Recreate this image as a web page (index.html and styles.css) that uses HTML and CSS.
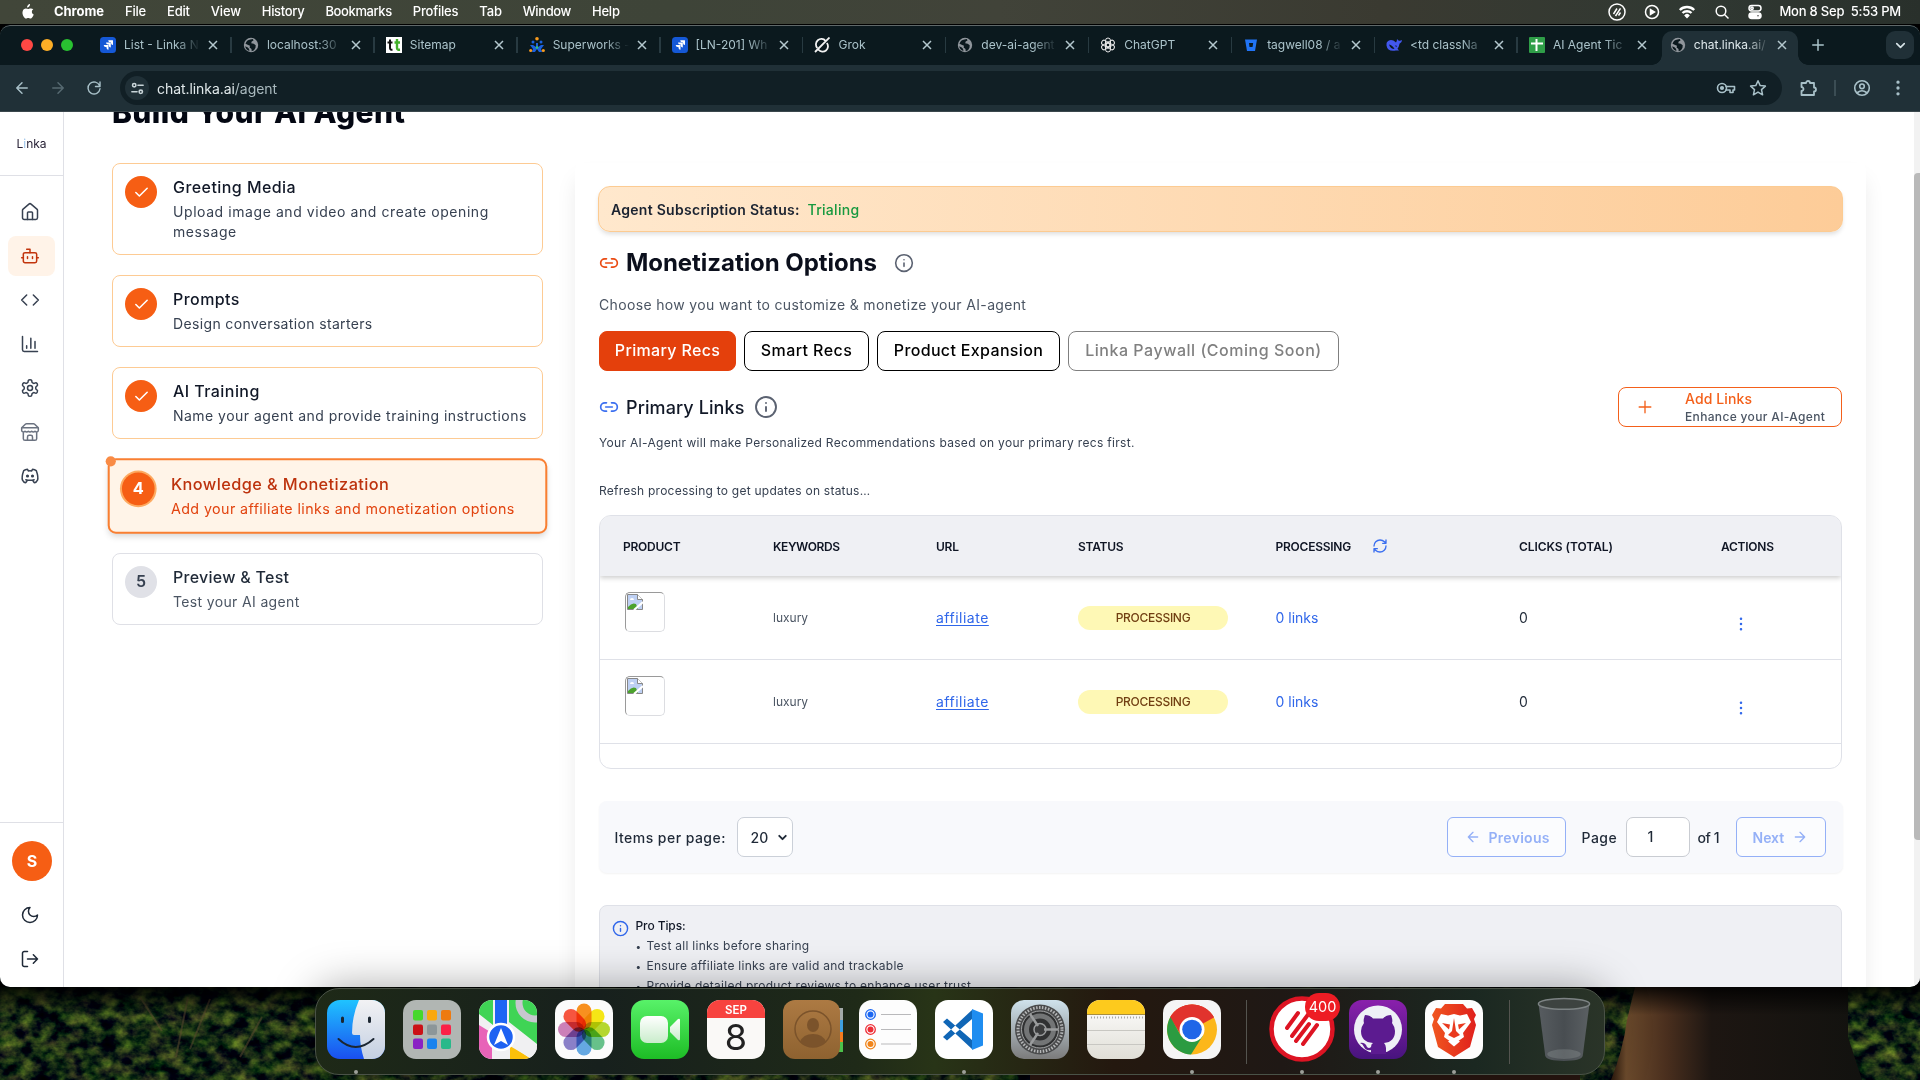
FILE: index.html
```html
<!DOCTYPE html>
<html lang="en">
<head>
<meta charset="utf-8">
<title>chat.linka.ai/agent</title>
<link rel="stylesheet" href="styles.css">
</head>
<body>
<svg class="defs" aria-hidden="true">
  <defs>
    <symbol id="home" viewBox="0 0 24 24"><path d="M15 21v-8a1 1 0 0 0-1-1h-4a1 1 0 0 0-1 1v8"/><path d="M3 10a2 2 0 0 1 .709-1.528l7-5.999a2 2 0 0 1 2.582 0l7 5.999A2 2 0 0 1 21 10v9a2 2 0 0 1-2 2H5a2 2 0 0 1-2-2z"/></symbol>
    <symbol id="bot" viewBox="0 0 24 24"><path d="M12 8V4H8M2 14h2M20 14h2M15 13v2M9 13v2"/><rect width="16" height="12" x="4" y="8" rx="2"/></symbol>
    <symbol id="code" viewBox="0 0 24 24"><path d="m16 18 6-6-6-6M8 6l-6 6 6 6"/></symbol>
    <symbol id="chart" viewBox="0 0 24 24"><path d="M3 3v16a2 2 0 0 0 2 2h16M18 17V9M13 17V5M8 17v-3"/></symbol>
    <symbol id="gear" viewBox="0 0 24 24"><path d="M12.22 2h-.44a2 2 0 0 0-2 2v.18a2 2 0 0 1-1 1.73l-.43.25a2 2 0 0 1-2 0l-.15-.08a2 2 0 0 0-2.73.73l-.22.38a2 2 0 0 0 .73 2.73l.15.1a2 2 0 0 1 1 1.72v.51a2 2 0 0 1-1 1.74l-.15.09a2 2 0 0 0-.73 2.73l.22.38a2 2 0 0 0 2.73.73l.15-.08a2 2 0 0 1 2 0l.43.25a2 2 0 0 1 1 1.73V20a2 2 0 0 0 2 2h.44a2 2 0 0 0 2-2v-.18a2 2 0 0 1 1-1.73l.43-.25a2 2 0 0 1 2 0l.15.08a2 2 0 0 0 2.73-.73l.22-.39a2 2 0 0 0-.73-2.73l-.15-.08a2 2 0 0 1-1-1.74v-.5a2 2 0 0 1 1-1.74l.15-.09a2 2 0 0 0 .73-2.73l-.22-.38a2 2 0 0 0-2.73-.73l-.15.08a2 2 0 0 1-2 0l-.43-.25a2 2 0 0 1-1-1.73V4a2 2 0 0 0-2-2z"/><circle cx="12" cy="12" r="3"/></symbol>
    <symbol id="store" viewBox="0 0 24 24"><path d="m2 7 4.41-4.41A2 2 0 0 1 7.83 2h8.34a2 2 0 0 1 1.42.59L22 7M4 12v8a2 2 0 0 0 2 2h12a2 2 0 0 0 2-2v-8M15 22v-4a2 2 0 0 0-2-2h-2a2 2 0 0 0-2 2v4M2 7h20M22 7v3a2 2 0 0 1-2 2 2.7 2.7 0 0 1-2-.8 2.7 2.7 0 0 1-4 0 2.7 2.7 0 0 1-4 0 2.7 2.7 0 0 1-4 0 2.7 2.7 0 0 1-2 .8 2 2 0 0 1-2-2V7"/></symbol>
    <symbol id="discord" viewBox="0 0 24 24"><path d="M8 12a1 1 0 1 0 2 0a1 1 0 0 0-2 0M14 12a1 1 0 1 0 2 0a1 1 0 0 0-2 0M15.5 17c0 1 1.5 3 2 3c1.5 0 2.833-1.667 3.5-3c.667-1.667.5-5.833-1.5-11.5c-1.457-1.015-3-1.34-4.5-1.5l-.972 1.923a11.913 11.913 0 0 0-4.053 0L9 4c-1.5.16-3.043.485-4.5 1.5c-2 5.667-2.167 9.833-1.5 11.5c.667 1.333 2 3 3.5 3c.5 0 2-2 2-3M7 16.5c3.5 1 6.5 1 10 0"/></symbol>
    <symbol id="moon" viewBox="0 0 24 24"><path d="M12 3a6 6 0 0 0 9 9 9 9 0 1 1-9-9z"/></symbol>
    <symbol id="logout" viewBox="0 0 24 24"><path d="m16 17 5-5-5-5M21 12H9M9 21H5a2 2 0 0 1-2-2V5a2 2 0 0 1 2-2h4"/></symbol>
    <symbol id="link" viewBox="0 0 24 24"><path d="M9 17H7A5 5 0 0 1 7 7h2M15 7h2a5 5 0 1 1 0 10h-2M8 12h8"/></symbol>
    <symbol id="info" viewBox="0 0 24 24"><circle cx="12" cy="12" r="10"/><path d="M12 16v-4M12 8h.01"/></symbol>
    <symbol id="refresh" viewBox="0 0 24 24"><path d="M3 12a9 9 0 0 1 9-9 9.75 9.75 0 0 1 6.74 2.74L21 8M21 3v5h-5M21 12a9 9 0 0 1-9 9 9.75 9.75 0 0 1-6.74-2.74L3 16M8 16H3v5"/></symbol>
    <symbol id="check" viewBox="0 0 24 24"><path d="M20 6 9 17l-5-5"/></symbol>
    <symbol id="plus" viewBox="0 0 24 24"><path d="M5 12h14M12 5v14"/></symbol>
    <symbol id="left" viewBox="0 0 24 24"><path d="m12 19-7-7 7-7M19 12H5"/></symbol>
    <symbol id="right" viewBox="0 0 24 24"><path d="M5 12h14M12 5l7 7-7 7"/></symbol>
    <symbol id="down" viewBox="0 0 24 24"><path d="m6 9 6 6 6-6"/></symbol>
    <symbol id="x" viewBox="0 0 16 16"><path d="m4 4 8 8M12 4l-8 8"/></symbol>
    <symbol id="dots" viewBox="0 0 24 24"><circle cx="12" cy="5" r="1"/><circle cx="12" cy="12" r="1"/><circle cx="12" cy="19" r="1"/></symbol>
    <symbol id="reload" viewBox="0 0 24 24"><path d="M19.5 9A8 8 0 1 0 20 13M20 4v6h-6"/></symbol>
    <symbol id="globe" viewBox="0 0 16 16"><circle cx="8" cy="8" r="7.2" fill="#8f959b" stroke="none"/><path fill="#0b191e" stroke="none" d="M7.5 2.4 9.8 2l.7 1.6-1.8 1-.5 1.7 2.5.4 2 1.5-.2 2.6-1.5 2.4-2.3 1-.2-2.1-1.9-1.6L7 8.700 5.200 8.100l-2.700-1.300A5.800 5.800 0 0 1 7.500 2.400zM2.200 9.300l2.600 1.200 1.300 1.500.3 2.100a6 6 0 0 1-4.200-4.800z"/></symbol>
    <symbol id="jira" viewBox="0 0 16 16"><rect width="16" height="16" rx="3.500" fill="#1558d6" stroke="none"/><path fill="#fff" stroke="none" d="M12.700 3.300H8.200a2 2 0 0 0 2 2h.8v.8a2 2 0 0 0 2 2V3.600zM10.500 5.600H6a2 2 0 0 0 2 2h.8v.8a2 2 0 0 0 2 2V5.900zM8.200 7.900H3.700a2 2 0 0 0 2 2h.8v.8a2 2 0 0 0 2 2V8.200z"/></symbol>
    <linearGradient id="gFinder" x2="0" y2="1"><stop stop-color="#1fc3ff"/><stop offset="1" stop-color="#1a4ff0"/></linearGradient>
    <linearGradient id="gFace" x2="0" y2="1"><stop stop-color="#f2f2f4"/><stop offset="1" stop-color="#c4d0e2"/></linearGradient>
    <linearGradient id="gGreen" x2="0" y2="1"><stop stop-color="#58f269"/><stop offset="1" stop-color="#1dbd25"/></linearGradient>
    <linearGradient id="gWhite" x2="0" y2="1"><stop stop-color="#fff"/><stop offset="1" stop-color="#c9eccb"/></linearGradient>
    <linearGradient id="gBook" x2="0" y2="1"><stop stop-color="#ad7a43"/><stop offset="1" stop-color="#8e6230"/></linearGradient>
    <linearGradient id="gSet" x2="0" y2="1"><stop stop-color="#cfe2ec"/><stop offset="1" stop-color="#7b7b7b"/></linearGradient>
    <linearGradient id="gNote" x2="0" y2="1"><stop stop-color="#fff"/><stop offset="1" stop-color="#e0ded6"/></linearGradient>
    <linearGradient id="gGit" x2="0" y2="1"><stop stop-color="#8a20ac"/><stop offset="1" stop-color="#47147e"/></linearGradient>
    <linearGradient id="gBrave"><stop stop-color="#f0561f"/><stop offset="1" stop-color="#e0201c"/></linearGradient>
    <linearGradient id="gTrash"><stop stop-color="#575c60"/><stop offset=".5" stop-color="#484d51"/><stop offset="1" stop-color="#5b6063"/></linearGradient>
    <linearGradient id="gTrunk"><stop stop-color="#2a180c"/><stop offset=".06" stop-color="#6b4a2c"/><stop offset=".22" stop-color="#4a2f1e"/><stop offset=".4" stop-color="#1d1612"/><stop offset="1" stop-color="#12120f"/></linearGradient>
    <filter id="leaves" x="0" y="0" width="100%" height="100%" color-interpolation-filters="sRGB"><feTurbulence type="fractalNoise" baseFrequency=".06 .08" numOctaves="4" seed="8"/><feColorMatrix values="0.2 .85 0 0 -.44  .4 .8 0 0 -.44  0 .2 0 0 -.02  0 0 0 0 1"/></filter>
    <clipPath id="tile"><rect width="58" height="59" rx="13"/></clipPath>
  </defs>
</svg>

<div class="desktop">
  <header class="menubar">
    <svg class="apple" viewBox="0 0 14 16"><path d="M9.700 0c.1 1.100-.3 2-.9 2.700-.6.700-1.500 1.200-2.300 1.100-.1-1 .3-1.900.9-2.600C8 .5 9 0 9.700 0zM13.300 5.500c-1 .6-1.600 1.500-1.600 2.700 0 1.400.8 2.500 2 3-.3.900-.7 1.800-1.300 2.600-.6.900-1.200 1.700-2.200 1.700-.9 0-1.300-.5-2.400-.5s-1.500.5-2.400.6c-1 0-1.700-1-2.300-1.800C1.800 12 .9 8.900 2.200 6.700c.6-1.100 1.800-1.900 3-1.900 1 0 1.800.6 2.500.6.600 0 1.700-.8 3-.7.900.1 1.900.3 2.600.8z"/></svg>
    <nav class="menus"><b>Chrome</b><span>File</span><span>Edit</span><span>View</span><span class="t3">History</span><span class="t4">Bookmarks</span><span>Profiles</span><span>Tab</span><span class="t4">Window</span><span>Help</span></nav>
    <div class="tray">
      <svg viewBox="0 0 18 18"><circle cx="9" cy="9" r="8"/><path d="m5.500 11 3.500-5.500M7.500 13l5-7.700M10.500 12.500l2-3"/></svg>
      <svg viewBox="0 0 18 18"><circle cx="9" cy="9" r="6.500"/><path fill="#fff" d="M7.500 6.500v5L11.500 9z"/></svg>
      <svg viewBox="0 0 18 18"><path class="thick" d="M1.800 7a10.300 10.300 0 0 1 14.400 0M4.500 10a6.500 6.500 0 0 1 9 0"/><path fill="#fff" d="M7.200 12.500a2.600 2.600 0 0 1 3.600 0L9 14.500z"/></svg>
      <svg viewBox="0 0 18 18"><circle cx="8" cy="8" r="4.800"/><path d="m11.500 11.500 4 4"/></svg>
      <svg class="cc" viewBox="0 0 14 16"><rect x="1" y="1.500" width="12" height="5.500" rx="2.700"/><circle cx="4" cy="4.200" r="1.200"/><rect x="1" y="9" width="12" height="5.500" rx="2.700" fill="#fff"/><circle cx="10" cy="11.700" r="1.500" fill="#333"/></svg>
      <span class="clock">Mon 8 Sep&nbsp; 5:53 PM</span>
    </div>
  </header>

  <div class="window">
    <div class="tabstrip">
      <div class="lights"><i></i><i></i><i></i></div>
      <div class="tab"><svg class="fav"><use href="#jira"/></svg><span>List - Linka N</span><svg class="close"><use href="#x"/></svg></div>
      <div class="tab"><svg class="fav"><use href="#globe"/></svg><span>localhost:30</span><svg class="close"><use href="#x"/></svg></div>
      <div class="tab"><svg class="fav" viewBox="0 0 16 16"><path fill="#fff" d="M0 0h16v16H0z"/><path fill="none" stroke="#111" stroke-width="2" d="M4 2.500v8.500q0 2 2.500 1.800M1.500 5.500h5"/><path fill="none" stroke="#43b02a" stroke-width="2.400" d="M11 2v9q0 2 3 1.800M8.500 5.500h5.500"/></svg><span>Sitemap</span><svg class="close"><use href="#x"/></svg></div>
      <div class="tab"><svg class="fav" viewBox="0 0 16 16"><g fill="#1b62e0"><circle cx="4" cy="5" r="1.500"/><circle cx="12" cy="5" r="1.500"/><path d="M1 8h3l3 2V6h2v4l3-2h3l-3 4 1 3h-3l-2-3-2 3H3l1-3z"/></g><g fill="#f79a1e"><circle cx="8" cy="1.800" r="1.800"/><circle cx="1.700" cy="13.500" r="1.600"/><circle cx="14.300" cy="13.500" r="1.600"/></g><circle cx="8" cy="10.500" r="1.300" fill="#35c46a"/></svg><span>Superworks -</span><svg class="close"><use href="#x"/></svg></div>
      <div class="tab"><svg class="fav"><use href="#jira"/></svg><span>[LN-201] Wh</span><svg class="close"><use href="#x"/></svg></div>
      <div class="tab"><svg class="fav" viewBox="0 0 16 16"><path fill="none" stroke="#f2f2f2" stroke-width="1.800" d="M11.500 3.800A5.200 5.200 0 0 0 3.300 11M4.500 12.700A5.200 5.200 0 0 0 12.800 6M1 15 15.500.5"/></svg><span>Grok</span><svg class="close"><use href="#x"/></svg></div>
      <div class="tab"><svg class="fav"><use href="#globe"/></svg><span>dev-ai-agent</span><svg class="close"><use href="#x"/></svg></div>
      <div class="tab"><svg class="fav" viewBox="0 0 16 16"><g fill="none" stroke="#e6e6e6" stroke-width="1"><rect x="5.500" y="1" width="5" height="9" rx="2.500"/><rect x="5.500" y="1" width="5" height="9" rx="2.500" transform="rotate(60 8 8)"/><rect x="5.500" y="1" width="5" height="9" rx="2.500" transform="rotate(120 8 8)"/><rect x="5.500" y="1" width="5" height="9" rx="2.500" transform="rotate(180 8 8)"/><rect x="5.500" y="1" width="5" height="9" rx="2.500" transform="rotate(240 8 8)"/><rect x="5.500" y="1" width="5" height="9" rx="2.500" transform="rotate(300 8 8)"/></g></svg><span>ChatGPT</span><svg class="close"><use href="#x"/></svg></div>
      <div class="tab"><svg class="fav" viewBox="0 0 16 16"><path fill="#2174f5" d="M2 2.500h12l-2 11.500H4z"/><path fill="#0b191e" d="M6 6h4.200l-.7 4h-3z"/></svg><span>tagwell08 / a</span><svg class="close"><use href="#x"/></svg></div>
      <div class="tab"><svg class="fav" viewBox="0 0 16 16"><path fill="#4257ee" d="M1 5q4-4 9 .5 1-1 1-3.500 1.500 1.500 2 1.800Q14.500 4 16 3q0 3-2.500 3.800-.5 3-2 5l1.500 1.700H9.800Q1.500 15 .5 8.500.3 6 1 5z"/><path fill="#0b191e" d="M3 7.500q3.500.5 5.500 4.500Q4.500 12 3 7.500zM9 8.500l1.800.2-.5 1.500z"/></svg><span>&lt;td classNa</span><svg class="close"><use href="#x"/></svg></div>
      <div class="tab"><svg class="fav" viewBox="0 0 16 16"><rect width="16" height="16" rx="1" fill="#2f9e48"/><path stroke="#fff" stroke-width="2" d="M7.500 2v12M2 6.500h12"/></svg><span>AI Agent Tic</span><svg class="close"><use href="#x"/></svg></div>
      <div class="tab current"><svg class="fav"><use href="#globe"/></svg><span>chat.linka.ai/</span><svg class="close"><use href="#x"/></svg></div>
      <svg class="icon newtab"><use href="#plus"/></svg>
      <div class="tabmenu"><svg class="icon"><use href="#down"/></svg></div>
    </div>
    <div class="toolbar">
      <div class="navs"><svg class="icon"><use href="#left"/></svg><svg class="icon dim"><use href="#right"/></svg><svg class="icon"><use href="#reload"/></svg></div>
      <div class="omnibox">
        <span class="site"><svg class="icon" viewBox="0 0 16 16"><circle cx="4.500" cy="4.500" r="1.800"/><path d="M8.500 4.500H14M2 11.500h5.500"/><circle cx="11.500" cy="11.500" r="1.800"/></svg></span>
        <span class="url"><b>chat.linka.ai</b>/agent</span>
        <svg class="icon key" viewBox="0 0 20 16"><circle cx="6" cy="8" r="4.500"/><circle cx="6" cy="8" r="1.300" fill="currentColor"/><path d="M10 6.500h8.500v3.500h-1.500v2.500h-3V10h-4"/></svg>
        <svg class="icon star" viewBox="0 0 18 18"><path d="m9 1.800 2.200 4.800 5.200.5-3.900 3.500 1.100 5.200L9 13.100l-4.600 2.700 1.100-5.200L1.600 7.100l5.200-.5z"/></svg>
      </div>
      <svg class="icon puzzle" viewBox="0 0 18 18"><path d="M2.500 4H7a2 2 0 0 1 4 0h4v4.500a2 2 0 0 1 0 4V16H2.500v-4a2 2 0 0 0 0-4z"/></svg>
      <i class="bar"></i>
      <svg class="icon profile" viewBox="0 0 18 18"><circle cx="9" cy="9" r="7.300"/><circle cx="9" cy="7.300" r="2.300"/><path d="M4.500 13.500q4.500-3.500 9 0"/></svg>
      <svg class="icon more"><use href="#dots"/></svg>
    </div>

    <div class="page">
      <aside class="sidebar">
        <div class="brand">L<i>i</i>nka</div>
        <nav class="side-nav">
          <a><svg class="icon"><use href="#home"/></svg></a>
          <a class="on"><svg class="icon"><use href="#bot"/></svg></a>
          <a><svg class="icon"><use href="#code"/></svg></a>
          <a><svg class="icon"><use href="#chart"/></svg></a>
          <a><svg class="icon"><use href="#gear"/></svg></a>
          <a class="muted"><svg class="icon"><use href="#store"/></svg></a>
          <a><svg class="icon"><use href="#discord"/></svg></a>
        </nav>
        <div class="side-foot">
          <span class="avatar">S</span>
          <a><svg class="icon"><use href="#moon"/></svg></a>
          <a><svg class="icon"><use href="#logout"/></svg></a>
        </div>
      </aside>

      <main class="main">
        <h1>Build Your AI Agent</h1>
        <div class="columns">
          <ol class="steps">
            <li class="step done"><span class="num"><svg class="icon"><use href="#check"/></svg></span><div><h3>Greeting Media</h3><p class="t6">Upload image and video and create opening message</p></div></li>
            <li class="step done"><span class="num"><svg class="icon"><use href="#check"/></svg></span><div><h3>Prompts</h3><p>Design conversation starters</p></div></li>
            <li class="step done"><span class="num"><svg class="icon"><use href="#check"/></svg></span><div><h3>AI Training</h3><p class="t5">Name your agent and provide training instructions</p></div></li>
            <li class="step active"><span class="num">4</span><div><h3>Knowledge &amp; Monetization</h3><p>Add your affiliate links and monetization options</p></div></li>
            <li class="step"><span class="num">5</span><div><h3>Preview &amp; Test</h3><p>Test your AI agent</p></div></li>
          </ol>

          <section class="panel">
            <div class="banner"><b>Agent Subscription Status:</b><span>Trialing</span></div>
            <div class="title"><svg class="icon link"><use href="#link"/></svg><h2>Monetization Options</h2><svg class="icon info"><use href="#info"/></svg></div>
            <p class="lead">Choose how you want to customize &amp; monetize your AI-agent</p>
            <div class="modes">
              <button class="mode selected">Primary Recs</button>
              <button class="mode smart">Smart Recs</button>
              <button class="mode expand">Product Expansion</button>
              <button class="mode off">Linka Paywall (Coming Soon)</button>
            </div>
            <div class="links-head">
              <svg class="icon link"><use href="#link"/></svg><h4>Primary Links</h4><svg class="icon info"><use href="#info"/></svg>
              <button class="add"><svg class="icon"><use href="#plus"/></svg><span><b>Add Links</b><small>Enhance your AI-Agent</small></span></button>
            </div>
            <p class="note">Your AI-Agent will make Personalized Recommendations based on your primary recs first.</p>
            <p class="note refresh">Refresh processing to get updates on status…</p>

            <div class="table">
              <div class="thead"><span>Product</span><span class="kw">Keywords</span><span>URL</span><span>Status</span><span class="proc">Processing<svg class="icon"><use href="#refresh"/></svg></span><span class="clk">Clicks (Total)</span><span>Actions</span></div>
              <div class="row">
                <span class="thumb"><svg viewBox="0 0 16 16"><path fill="#bed0f3" stroke="#878787" d="M.5.5h10l5 5v10H.5z"/><path fill="#fff" stroke="#878787" d="M10.500.5v5h5"/><path fill="#fff" d="M3 6q0-2 2-2 2 0 2 2z"/><path fill="#4ba22d" d="M1 15v-2q4-5 8-3l2 5z"/><path stroke="#fff" stroke-width="2.200" d="m7 16 9-8"/></svg></span>
                <span class="word">luxury</span><a class="aff">affiliate</a><span class="pill">PROCESSING</span><a>0 links</a><span>0</span><svg class="icon more"><use href="#dots"/></svg>
              </div>
              <div class="row">
                <span class="thumb"><svg viewBox="0 0 16 16"><path fill="#bed0f3" stroke="#878787" d="M.5.5h10l5 5v10H.5z"/><path fill="#fff" stroke="#878787" d="M10.500.5v5h5"/><path fill="#fff" d="M3 6q0-2 2-2 2 0 2 2z"/><path fill="#4ba22d" d="M1 15v-2q4-5 8-3l2 5z"/><path stroke="#fff" stroke-width="2.200" d="m7 16 9-8"/></svg></span>
                <span class="word">luxury</span><a class="aff">affiliate</a><span class="pill">PROCESSING</span><a>0 links</a><span>0</span><svg class="icon more"><use href="#dots"/></svg>
              </div>
            </div>

            <div class="pager">
              <span class="per">Items per page:</span>
              <span class="select">20<svg class="icon"><use href="#down"/></svg></span>
              <button class="pg prev"><svg class="icon"><use href="#left"/></svg>Previous</button>
              <span class="pgword">Page</span><span class="pgnum">1</span><span class="of">of 1</span>
              <button class="pg next">Next<svg class="icon"><use href="#right"/></svg></button>
            </div>

            <div class="tips">
              <svg class="icon"><use href="#info"/></svg>
              <div><h5>Pro Tips:</h5><ul><li>Test all links before sharing</li><li>Ensure affiliate links are valid and trackable</li><li>Provide detailed product reviews to enhance user trust</li></ul></div>
            </div>
          </section>
        </div>
      </main>
      <div class="scrollbar"><i></i></div>
    </div>
  </div>

  <div class="wallpaper">
    <svg width="1920" height="93" viewBox="0 0 1920 93"><rect width="1920" height="93" filter="url(#leaves)"/>
      <path fill="none" stroke="#5b4a30" stroke-width="2" opacity=".5" d="m140 10 22 34M188 10l-12 60M210 12l-20 50M262 30l-22 40"/>
      <path fill="url(#gTrunk)" d="M1635 0h213v50l14 43h-251q12-30 16-60z"/>
      <path fill="#2a1711" d="M1030 86h550v7h-550z"/>
    </svg>
  </div>

  <div class="dock">
    <span class="app run"><svg viewBox="0 0 58 59"><g clip-path="url(#tile)"><path fill="url(#gFinder)" d="M0 0h58v59H0z"/><path fill="url(#gFace)" d="M32 0q-7 16-7 33 0 2 2 2h6q0 12 4 24h21V0z"/></g><path fill="none" stroke="#1b2631" stroke-width="2" stroke-linecap="round" d="M11.500 39q17 16 35 0"/><path stroke="#1b2631" stroke-width="3" stroke-linecap="round" d="M15.500 18v3.500M42.500 18v3.500"/></svg></span>
    <span class="app"><svg viewBox="0 0 58 59"><rect width="58" height="59" rx="13" fill="#b1b6b3"/><g><rect x="10" y="10" width="10" height="10.500" rx="2" fill="#46d82c"/><rect x="24" y="10" width="10" height="10.500" rx="2" fill="#f9a80f"/><rect x="38" y="10" width="10" height="10.500" rx="2" fill="#ee7a10"/><rect x="10" y="24.500" width="10" height="10.500" rx="2" fill="#cb1016"/><rect x="24" y="24.500" width="10" height="10.500" rx="2" fill="#8c9699"/><rect x="38" y="24.500" width="10" height="10.500" rx="2" fill="#fa2147"/><rect x="10" y="38.500" width="10" height="10.500" rx="2" fill="#8a22c4"/><rect x="24" y="38.500" width="10" height="10.500" rx="2" fill="#1b83ee"/><rect x="38" y="38.500" width="10" height="10.500" rx="2" fill="#28b98a"/></g></svg></span>
    <span class="app"><svg viewBox="0 0 58 59"><g clip-path="url(#tile)"><path fill="#f0f0f2" d="M0 0h58v59H0z"/><path fill="#3fd455" d="M0 0h14v25L0 14zM30 0h28v44L30 22z"/><circle cx="56" cy="3" r="16" fill="none" stroke="#c7c7cf" stroke-width="7"/><path fill="#e863b8" d="M0 25l13 8v26H0z"/><path fill="#fbc00a" d="M31 59V46l22 13z"/><path fill="#f0f0f2" d="m30 29 28 18v12h-6L30 44z"/><path fill="#1d65f3" d="M16 0h12v30H16z"/></g><circle cx="22" cy="37" r="13" fill="#1e62f2" stroke="#fff" stroke-width="2.500"/><path fill="#fff" d="m22 28 7 17-7-4-7 4z"/></svg></span>
    <span class="app"><svg viewBox="0 0 58 59"><rect width="58" height="59" rx="13" fill="#fbfbfb"/><g class="petals"><rect x="21.500" y="3.500" width="15" height="26" rx="7.500" fill="#f8901f"/><rect x="21.500" y="3.500" width="15" height="26" rx="7.500" fill="#f5e616" transform="rotate(45 29 29.500)"/><rect x="21.500" y="3.500" width="15" height="26" rx="7.500" fill="#b5d72f" transform="rotate(90 29 29.500)"/><rect x="21.500" y="3.500" width="15" height="26" rx="7.500" fill="#67c18a" transform="rotate(135 29 29.500)"/><rect x="21.500" y="3.500" width="15" height="26" rx="7.500" fill="#65a8e2" transform="rotate(180 29 29.500)"/><rect x="21.500" y="3.500" width="15" height="26" rx="7.500" fill="#8a80c8" transform="rotate(225 29 29.500)"/><rect x="21.500" y="3.500" width="15" height="26" rx="7.500" fill="#cc80b8" transform="rotate(270 29 29.500)"/><rect x="21.500" y="3.500" width="15" height="26" rx="7.500" fill="#f6553f" transform="rotate(315 29 29.500)"/></g></svg></span>
    <span class="app"><svg viewBox="0 0 58 59"><rect width="58" height="59" rx="13" fill="url(#gGreen)"/><rect x="9" y="16" width="28" height="27" rx="7" fill="url(#gWhite)"/><path fill="url(#gWhite)" d="m39 27 8-8q2-1 2 1v19q0 2-2 1l-8-8z"/></svg></span>
    <span class="app cal"><b>SEP</b><em>8</em></span>
    <span class="app"><svg viewBox="0 0 58 59"><path fill="#a4aaa9" d="M53 8h7v12h-7z"/><path fill="#3fa0df" d="M53 20h7v12h-7z"/><path fill="#f47c1e" d="M53 32h7v10h-7z"/><path fill="#4cc24a" d="M53 42h7v10h-7z"/><rect width="57" height="59" rx="12" fill="url(#gBook)"/><g fill="#7b532b"><circle cx="30" cy="29" r="18" fill="none" stroke="#7b532b" stroke-width="1.500"/><ellipse cx="30" cy="25" rx="6" ry="7"/><path d="M17 42q3-8 13-8t13 8q-5 5-13 5t-13-5z"/></g></svg></span>
    <span class="app"><svg viewBox="0 0 58 59"><rect width="58" height="59" rx="13" fill="#fdfdfd"/><g stroke-width="1.300" fill="none"><circle cx="11.500" cy="14.500" r="4.800" stroke="#1c67f2"/><circle cx="11.500" cy="29.500" r="4.800" stroke="#ee2d35"/><circle cx="11.500" cy="44" r="4.800" stroke="#f1851b"/></g><circle cx="11.500" cy="14.500" r="3" fill="#1c67f2"/><circle cx="11.500" cy="29.500" r="3" fill="#ee2d35"/><circle cx="11.500" cy="44" r="3" fill="#f1851b"/><path stroke="#b9b9bb" d="M22 14.500h30M22 29.500h30M22 44h30"/></svg></span>
    <span class="app run"><svg viewBox="0 0 58 59"><rect width="58" height="59" rx="13" fill="#fff"/><path fill="#1066b6" d="m8 22 4-3.500L37 40v9zM8 37l4 3.500L37 19v-9z"/><path fill="#1f8df0" d="m37 9 11 4.500v32L37 50z"/><path fill="#fff" d="M37 22v16L27 30z"/></svg></span>
    <span class="app"><svg viewBox="0 0 58 59"><rect width="58" height="59" rx="13" fill="url(#gSet)"/><circle cx="29" cy="29.500" r="25" fill="#4a4b4c"/><circle cx="29" cy="29.500" r="22" fill="none" stroke="#b5b7b8" stroke-width="3" stroke-dasharray="1.500 1.500"/><circle cx="29" cy="29.500" r="18.500" fill="#303132" stroke="#a2a4a5"/><circle cx="29" cy="29.500" r="13.500" fill="none" stroke="#737576" stroke-width="5"/><circle cx="29" cy="29.500" r="6" fill="#3b3c3d" stroke="#9a9c9d" stroke-width="1.500"/><path stroke="#9a9c9d" stroke-width="2.500" d="M33 29.500h14M27 26l-8-12M27 33l-8 12"/></svg></span>
    <span class="app"><svg viewBox="0 0 58 59"><g clip-path="url(#tile)"><path fill="url(#gNote)" d="M0 0h58v59H0z"/><path fill="#fdca1d" d="M0 0h58v14H0z"/><path stroke="#a88e3e" d="M0 14.500h58"/><path stroke="#a9a9a6" stroke-width="2" stroke-dasharray="1 2" d="M4 17.500h54"/><path stroke="#c8c7c2" d="M0 30.500h58M0 44.500h58"/></g></svg></span>
    <span class="app run"><svg viewBox="0 0 58 59"><rect width="58" height="59" rx="13" fill="#f5f5f5"/><circle cx="29" cy="29.500" r="25" fill="#fcb71a"/><path fill="#e1332d" d="M29 29.500 7.400 17A25 25 0 0 1 51 17.500z"/><path fill="#e1332d" d="M7 17.500A25 25 0 0 1 50.700 17H29L18 35z"/><path fill="#2b9b41" d="M7.400 17A25 25 0 0 0 28 54.500L40 35.500 29 41l-11-5z"/><circle cx="29" cy="29.500" r="12.500" fill="#fff"/><circle cx="29" cy="29.500" r="9.800" fill="#1f66e8"/></svg></span>
    <i class="split"></i>
    <span class="app run round"><svg viewBox="0 0 66 66"><circle cx="33" cy="33" r="30.500" fill="#fff" stroke="#dd1423" stroke-width="4.500"/><path stroke="#dd1423" stroke-width="4" stroke-linecap="round" d="m18 32 11-15M23 40l18-24M27 45l13-17M34 48l14-19"/></svg><b class="badge">400</b></span>
    <span class="app run"><svg viewBox="0 0 58 59"><rect width="58" height="59" rx="13" fill="url(#gGit)"/><circle cx="29" cy="29.500" r="24" fill="#eef0f6"/><path fill="#5c1b90" d="M16 15q5 0 8 3.500h10Q37 15 42 15q2 5 1 8 3 4 3 8 0 11-11 12 2 2 2 5v6H22v-4q-5 1-7-3-1-3-4-4 5-1 7 4 2 2 4 0 0-3 2-4-12-1-12-12 0-4 3-8-1-3 1-8z"/></svg></span>
    <span class="app run"><svg viewBox="0 0 58 59"><rect width="58" height="59" rx="13" fill="#fdfdfd"/><path fill="url(#gBrave)" d="M20 4h18l4 4.500 5-.5 4 7-2 4 2 6-6 22-16 10-16-10-6-22 2-6-2-4 4-7 5 .5z"/><path fill="#fff" d="m16 14 7 1.500 6-1.500 6 1.500 7-1.500 4 8-8 11 1 4-7 5-3-1-3 1-7-5 1-4-8-11z"/><path fill="#e93a1f" d="m17 23 8 1.500-1 5zM41 23l-8 1.500 1 5zM29 18l2 13 4 4-6 3-6-3 4-4z"/><path fill="#fff" d="m29 38 6 3.500-6 5-6-5z"/></svg></span>
    <i class="split second"></i>
    <span class="app trash"><svg viewBox="0 0 54 66"><path fill="url(#gTrash)" d="M1 6 8 60q2 5 19 5t19-5l7-54z"/><ellipse cx="27" cy="7" rx="26" ry="5.500" fill="#3d4340" stroke="#7d8384" stroke-width="1.500"/><ellipse cx="27" cy="58" rx="17" ry="5" fill="#9ba1a3" opacity=".3"/></svg></span>
  </div>
</div>
</body>
</html>
```
FILE: styles.css
```css
* { box-sizing: border-box; }
body, h1, h2, h3, h4, h5, p, ul, ol { margin: 0; padding: 0; }
body { width: 1920px; height: 1080px; overflow: hidden; background: #000; font-family: "Inter", "Noto Sans", sans-serif; }
ol, ul { list-style: none; }
i, em { font-style: normal; }
button { font: inherit; background: none; padding: 0; }
svg { display: block; flex: none; }
.defs { position: absolute; width: 0; height: 0; }
.icon { width: 20px; height: 20px; fill: none; stroke: currentColor; stroke-width: 2; stroke-linecap: round; stroke-linejoin: round; }

.desktop { position: relative; width: 1920px; height: 1080px; display: flex; flex-direction: column; overflow: hidden; }

/* menu bar */
.menubar { height: 24px; flex: none; display: flex; align-items: center; padding: 0 19px 0 21px; color: #fff; font-size: 13px; font-weight: 500; line-height: 23px; background: linear-gradient(90deg, #414639, #3e4438 35%, #414339 52%, #3a3a31 72%, #303832 88%, #29302b); }
.apple { width: 13px; height: 15px; fill: #fff; margin-right: 20px; margin-top: -2px; }
.menus { display: flex; gap: 21px; letter-spacing: -.2px; margin-top: -1px; }
.menus b { font-weight: 700; letter-spacing: -.05px; width: 50px; }
.menus .t3 { letter-spacing: -.3px; }
.menus .t4 { letter-spacing: -.4px; }
.tray { margin-left: auto; margin-top: -1px; display: flex; align-items: center; gap: 17px; }
.tray svg { width: 18px; height: 18px; fill: none; stroke: #fff; stroke-width: 1.500; }
.tray .thick { stroke-width: 2.400; }
.tray .cc { width: 14px; height: 16px; }
.clock { letter-spacing: -.22px; white-space: nowrap; }

/* browser window */
.window { position: relative; height: 963px; flex: none; display: flex; flex-direction: column; border-top: 1px solid #000; border-radius: 10px; overflow: hidden; background: #0b191e; }
.tabstrip { height: 40px; flex: none; display: flex; align-items: flex-end; border-top: 1px solid #5f6869; background: #0b191e; border-radius: 10px 10px 0 0; color: #abc3ca; font-size: 12px; }
.lights { width: 89px; height: 28px; margin-bottom: 6px; align-items: center; padding-left: 21px; display: flex; gap: 8px; flex: none; }
.lights i { width: 12px; height: 12px; border-radius: 50%; background: #ff4844; }
.lights i:nth-child(2) { background: #fdae26; }
.lights i:nth-child(3) { background: #29c231; }
.tab { width: 142.900px; flex: none; height: 34px; display: flex; align-items: center; padding: 0 11px 6px; position: relative; }
.tab::after { content: ""; position: absolute; right: 0; top: 6px; width: 1.500px; height: 16px; background: #283a41; }
.tab:nth-child(12)::after { display: none; }
.fav { width: 16px; height: 16px; margin-right: 8px; stroke-width: 0; }
.tab span { flex: 1; overflow: hidden; white-space: nowrap; line-height: 16px; mask-image: linear-gradient(90deg, #000 52px, transparent 76px); margin-right: 3px; }
.tab:nth-child(4) span, .tab:nth-child(9) span { mask-image: none; }
.close { width: 16px; height: 16px; stroke: #b4c8ce; stroke-width: 1.500; fill: none; }
.tab.current { width: 136px; padding: 0 8px 6px; background: #203037; border-radius: 10px 10px 0 0; color: #dfe9ec; margin-left: 1px; }
.tab.current::before { content: ""; position: absolute; left: -10px; right: -10px; bottom: 0; height: 10px; background: radial-gradient(circle at 0 0, transparent 9.500px, #203037 10px) 0 0 / 10px 10px no-repeat, radial-gradient(circle at 100% 0, transparent 9.500px, #203037 10px) 100% 0 / 10px 10px no-repeat; }
.tab.current::after { display: none; }
.newtab { width: 18px; height: 18px; margin: 0 0 11px 11px; }
.tabmenu { margin: 0 6px 6px auto; width: 28px; height: 28px; border-radius: 9px; background: #203037; display: grid; place-items: center; color: #d6e3e7; }
.tabmenu .icon { width: 15px; height: 15px; stroke-width: 2.600; }
.toolbar { height: 47px; flex: none; display: flex; align-items: center; background: #203037; border-bottom: 1px solid #3b474c; color: #a8c0c8; }
.navs { width: 120px; padding-left: 13px; display: flex; gap: 18px; }
.navs .icon { width: 18px; height: 18px; stroke-width: 1.900; }
.dim { opacity: .4; }
.omnibox { width: 1662px; height: 34px; border-radius: 17px; background: #111f25; display: flex; align-items: center; padding: 0 15px 0 5px; }
.site { width: 24px; height: 24px; border-radius: 50%; background: #203037; display: grid; place-items: center; color: #c8d4d8; }
.site .icon { width: 15px; height: 15px; stroke-width: 1.700; }
.url { margin-left: 8px; font-size: 14px; letter-spacing: -.06px; color: #a9b9be; flex: 1; }
.url b { font-weight: 400; color: #e0e8ea; }
.key { height: 16px; stroke-width: 1.600; margin-right: 13px; }
.star { width: 18px; height: 18px; stroke-width: 1.500; }
.puzzle { width: 18px; height: 18px; margin-left: 17px; stroke-width: 1.800; }
.bar { width: 1.500px; height: 16px; background: #3b4d54; margin: 0 17px; }
.profile { width: 18px; height: 18px; stroke-width: 1.600; }
.toolbar .more { margin-left: 17px; fill: currentColor; }

/* page */
.page { height: 875px; display: flex; background: #fff; overflow: hidden; flex: none; position: relative; }
.sidebar { width: 64px; height: 875px; border-right: 1px solid #dfe0e6; display: flex; flex-direction: column; color: #374151; flex: none; }
.brand { height: 64px; border-bottom: 1px solid #dfe0e6; display: grid; grid-auto-flow: column; place-content: center; align-items: center; font-size: 12px; color: #2a2438; }
.brand i { color: #9cc3ea; }
.side-nav { padding: 16px 8px 0; display: flex; flex-direction: column; gap: 4px; }
.side-nav a, .side-foot a { height: 40px; border-radius: 8px; padding: 10px 12px; }
.side-nav .icon, .side-foot .icon { stroke-width: 1.800; }
.side-nav a.on { background: #fff3e8; color: #c2340c; }
.side-nav a.muted { color: #6b7280; }
.side-foot { margin-top: auto; height: 165px; border-top: 1px solid #dfe0e6; padding: 18px 8px 0; display: flex; flex-direction: column; gap: 4px; color: #1f2937; }
.avatar { width: 40px; height: 40px; margin: 0 0 10px 4px; border-radius: 50%; background: #f65e14; color: #fff; font-size: 16px; font-weight: 700; display: grid; place-items: center; flex: none; }

.main { width: 1850px; padding: 0 48px; flex: none; }
h1 { font-size: 30px; line-height: 36px; font-weight: 800; letter-spacing: .42px; color: #030712; margin: -18px 0 33px; }
.columns { display: flex; align-items: flex-start; gap: 32px; }
.steps { width: 431px; display: flex; flex-direction: column; gap: 20px; flex: none; }
.step { border: 1px solid #dfe0e6; border-radius: 8px; padding: 12px; display: flex; gap: 16px; position: relative; }
.step h3 { font-size: 16px; line-height: 22px; margin-bottom: 4px; font-weight: 500; letter-spacing: .27px; color: #1f2937; }
.step p { font-size: 14px; line-height: 20px; letter-spacing: .35px; color: #4b5563; }
.step p.t5 { letter-spacing: .47px; white-space: nowrap; }
.step p.t6 { letter-spacing: .57px; }
.num { width: 32px; height: 32px; border-radius: 50%; background: #e0e1e7; color: #374151; font-size: 16px; line-height: 30px; font-weight: 600; display: grid; justify-items: center; flex: none; }
.step.done { border-color: #fdcb94; }
.step.done h3 { color: #111827; letter-spacing: .44px; }
.step.done p { color: #374151; }
.step.done .num { background: #f65e14; color: #fff; align-items: center; }
.num .icon { width: 17px; height: 17px; stroke-width: 2.200; }
.step.active { border: 2px solid #f97f32; background: #fff4e8; transform: scale(1.020); box-shadow: 0 4px 7px -2px rgba(0, 0, 0, .18); }
.step.active::before { content: ""; position: absolute; left: -4px; top: -4px; width: 10px; height: 10px; border-radius: 50%; background: #f98b45; }
.step.active h3 { color: #bd320d; letter-spacing: .4px; }
.step.active p { color: #e2430f; letter-spacing: .4px; white-space: nowrap; }
.step.active .num { background: #f65e14; color: #fff; font-weight: 700; box-shadow: 0 0 0 2px #fdaa61; }

.panel { width: 1291px; height: 900px; padding: 23px 24px 0; flex: none; display: flex; flex-direction: column; box-shadow: 0 14px 22px -3px rgba(0, 0, 0, .1); border-radius: 8px; }
.banner { height: 46px; flex: none; margin: 0 -.5px 0 -1px; border: 1px solid #fccb92; border-radius: 12px; background: linear-gradient(90deg, #ffe8cd, #fdcc98); box-shadow: 0 3px 5px -1px rgba(0, 0, 0, .14); display: flex; align-items: center; padding-left: 12px; font-size: 14px; }
.banner b { font-weight: 600; letter-spacing: .28px; color: #1a2230; width: 196.500px; white-space: nowrap; }
.banner span { font-weight: 500; letter-spacing: .3px; color: #17993f; }
.title { height: 32px; margin-top: 15px; display: flex; align-items: center; color: #0b0f1c; }
.link { width: 20px; height: 20px; color: #ea4a12; margin-right: 7px; }
h2 { font-size: 24px; line-height: 32px; font-weight: 700; letter-spacing: -.05px; width: 252px; white-space: nowrap; }
.info { color: #5b6271; stroke-width: 1.900; }
.title .info { margin-left: 16px; }
.lead { font-size: 14px; line-height: 20px; letter-spacing: .34px; color: #4b5563; margin-top: 16px; }
.modes { margin-top: 16px; display: flex; gap: 8px; }
.mode { height: 40px; border: 1px solid #000; border-radius: 8px; font-size: 16px; font-weight: 500; width: 137px; white-space: nowrap; letter-spacing: .34px; padding-bottom: 2px; color: #000; }
.mode.selected { background: #e4400c; border-color: #e4400c; color: #fff; }
.mode.smart { width: 125px; letter-spacing: .42px; }
.mode.expand { width: 183px; }
.mode.off { width: 271px; letter-spacing: .52px; border-color: #7f7f7f; color: #808080; }
.links-head { margin-top: 16px; height: 40px; display: flex; align-items: center; color: #111827; }
.links-head .link { color: #3b6ff0; }
h4 { font-size: 18px; font-weight: 500; width: 128px; letter-spacing: .1px; }
.links-head .info { width: 24px; height: 24px; }
.add { margin-left: auto; width: 224px; height: 40px; border: 1px solid #f4601a; border-radius: 8px; display: flex; align-items: center; text-align: left; padding-left: 16px; color: #f4601a; }
.add .icon { stroke-width: 1.600; margin-right: 30px; }
.add b { display: block; font-size: 14px; line-height: 18px; font-weight: 500; letter-spacing: .11px; }
.add small { display: block; font-size: 12px; line-height: 17px; font-weight: 500; letter-spacing: .34px; color: #4b5563; white-space: nowrap; }
.note { font-size: 12px; line-height: 16px; letter-spacing: .31px; color: #374151; margin-top: 8px; }
.refresh { margin-top: 32px; letter-spacing: .24px; }

.table { margin-top: 16px; height: 254px; flex: none; border: 1px solid #dfe1e8; border-radius: 12px; overflow: hidden; }
.thead, .row { display: grid; grid-template-columns: 150px 163px 142px 197.500px 243.500px 202px 1fr; align-items: center; padding-left: 23px; }
.thead { height: 60px; background: #eff0f4; font-size: 12px; font-weight: 600; text-transform: uppercase; letter-spacing: -.25px; color: #0f1524; box-shadow: 0 2px 5px rgba(0, 0, 0, .2); position: relative; }
.thead .kw { letter-spacing: -.4px; }
.thead .clk { letter-spacing: -.05px; }
.proc { display: flex; align-items: center; gap: 21px; }
.proc .icon { width: 16px; height: 16px; color: #3b6ff0; }
.row { height: 84px; border-bottom: 1px solid #dfe1e8; font-size: 14px; color: #1f2937; }
.row a { color: #2f66ea; }
.thumb { width: 40px; height: 40px; margin: -12px 0 0 2px; border: 1px solid #dcdde1; border-top-color: #9a9a9a; border-left-color: #9a9a9a; border-radius: 5px; padding: 1px 0 0 1px; }
.thumb svg { width: 16px; height: 16px; fill: none; }
.word { font-size: 12px; color: #4b5563; }
.row .aff { text-decoration: underline; letter-spacing: .5px; text-underline-offset: 2px; }
.pill { width: 150px; height: 24px; line-height: 24px; border-radius: 12px; background: #fef8b5; color: #713f12; font-size: 12px; font-weight: 500; text-align: center; letter-spacing: -.28px; }
.row .more { margin: 13px 0 0 11px; width: 18px; height: 18px; color: #2f66ea; fill: #2f66ea; stroke-width: 1.400; }

.pager { margin: 32px -.5px 0; height: 72px; flex: none; border-radius: 8px; background: #f8f9fc; box-shadow: 0 1px 2px rgba(0, 0, 0, .05); display: flex; align-items: center; padding: 0 17px 0 16px; font-size: 14px; font-weight: 500; color: #1f2937; }
.per { width: 122px; letter-spacing: .46px; white-space: nowrap; }
.select { width: 56px; height: 40px; border: 1px solid #cbd0d8; border-radius: 7px; background: #fff; display: flex; align-items: center; padding-left: 13px; gap: 8px; }
.select .icon { width: 13px; height: 13px; stroke-width: 3.500; }
.pg { height: 40px; border: 1px solid #94b0f7; border-radius: 6px; color: #94b0f7; background: #fbfcfe; font-weight: 600; display: flex; align-items: center; gap: 8px; }
.pg .icon { width: 16px; height: 16px; }
.prev { margin-left: auto; width: 119px; padding-left: 17px; letter-spacing: .28px; }
.next { width: 90px; padding-left: 16px; }
.pgword { margin: 0 8px 0 16px; width: 36px; letter-spacing: .5px; }
.pgnum { width: 64px; height: 40px; line-height: 38px; border: 1px solid #c9ccd2; border-radius: 7px; background: #fff; padding-left: 21px; }
.of { margin: 0 16px 0 8px; width: 22px; letter-spacing: -.44px; white-space: nowrap; }
.tips { margin-top: 32px; height: 130px; flex: none; border: 1px solid #dfe1e8; border-radius: 8px; background: #eff0f4; display: flex; padding: 10px 12px; gap: 6.500px; }
.tips > .icon { width: 17px; height: 17px; margin-top: 4px; color: #2f66ea; }
.tips div { font-size: 12px; line-height: 20px; color: #374151; }
h5 { font-size: 12px; line-height: 20px; font-weight: 500; color: #111827; letter-spacing: -.1px; }
.tips li { display: flex; letter-spacing: .27px; }
.tips li::before { content: "•"; width: 11px; font-size: 10px; }
.scrollbar { width: 6px; background: #f2f2f2; padding-top: 61px; }
.scrollbar i { display: block; height: 667px; border-radius: 4px 0 0 4px; background: #b9b9b9; }

/* desktop picture and dock */
.wallpaper { height: 93px; flex: none; overflow: hidden; background: #0d180f; }
.wallpaper::after { content: ""; display: block; height: 93px; margin-top: -93px; position: relative; background: linear-gradient(#000, rgba(0, 0, 0, 0) 28px); opacity: .85; }
.dock { position: absolute; left: 315px; top: 988px; width: 1290px; height: 87px; border: 1px solid #4a5247; border-radius: 24px; background: linear-gradient(90deg, #1e2917, #17201d 22%, #1f2a18 42%, #283417 48%, #24180f 62%, #1f1815 75%, #1b2821 90%, #2a3428); box-shadow: 0 0 44px rgba(0, 0, 0, .36); display: flex; align-items: flex-start; gap: 18px; padding: 11px 0 0 11px; }
.app { width: 58px; height: 59px; position: relative; flex: none; }
.app svg { width: 58px; height: 59px; overflow: visible; }
.petals { isolation: isolate; }
.petals rect { mix-blend-mode: multiply; }
.run::after { content: ""; position: absolute; left: 27px; bottom: -15px; width: 4px; height: 4px; border-radius: 50%; background: #9da09a; }
.cal { border-radius: 13px; overflow: hidden; background: #faf9f7; display: flex; flex-direction: column; align-items: center; }
.cal b { width: 58px; height: 18px; background: #f7433f; color: #fff; text-align: center; font-size: 11.500px; line-height: 20px; font-weight: 600; }
.cal em { font-size: 36px; line-height: 38px; color: #222; font-weight: 400; }
.split { width: 1px; height: 64px; background: #54544f; margin: 0 8px 0 7px; }
.round svg { width: 66px; height: 66px; margin: -4px; }
.badge { position: absolute; left: 32px; top: -7px; width: 35px; height: 28px; border-radius: 14px; background: #ee1c24; color: #fff; font-size: 14.500px; font-weight: 400; line-height: 28px; text-align: center; }
.split.second { margin: 0 9px 0 8px; }
.trash svg { width: 54px; height: 65px; margin: -3px 0 0 0; }
```
